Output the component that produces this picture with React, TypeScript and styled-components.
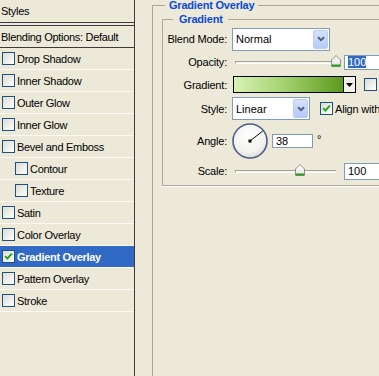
import React from 'react';
import styled, { createGlobalStyle } from 'styled-components';

const GlobalStyle = createGlobalStyle`
  html, body {
    margin: 0;
    padding: 0;
    background: #ece9d8;
    overflow: hidden;
  }
  body {
    font-family: "Liberation Sans", Arial, sans-serif;
    font-size: 11px;
    color: #000;
  }
`;

const effects = [
    { name: 'Drop Shadow' },
    { name: 'Inner Shadow' },
    { name: 'Outer Glow' },
    { name: 'Inner Glow' },
    { name: 'Bevel and Emboss' },
    { name: 'Contour', indent: true },
    { name: 'Texture', indent: true },
    { name: 'Satin' },
    { name: 'Color Overlay' },
    { name: 'Gradient Overlay', on: true, selected: true },
    { name: 'Pattern Overlay' },
    { name: 'Stroke' },
];

function Check({ on }: { on?: boolean }) {
    return (
        <CheckBox>
            {on && (
                <svg width="9" height="9" viewBox="0 0 9 9">
                    <path d="M1.2 4.2 L3.4 6.6 L7.8 1.6" fill="none" stroke="#21a121" strokeWidth="1.9"/>
                </svg>
            )}
        </CheckBox>
    );
}

function Chevron() {
    return (
        <DropBtn>
            <svg width="8" height="6" viewBox="0 0 8 6">
                <path d="M1 1.2 L4 4.2 L7 1.2" fill="none" stroke="#4d6185" strokeWidth="2"/>
            </svg>
        </DropBtn>
    );
}

function Slider({ pos }: { pos: number }) {
    return (
        <Track>
            <Thumb style={{ left: `calc(${pos}% - 5px)` }}>
                <svg width="10" height="12" viewBox="0 0 10 12">
                    <defs>
                        <linearGradient id="th" x1="0" y1="0" x2="0" y2="1">
                            <stop offset="0" stopColor="#ffffff"/>
                            <stop offset="1" stopColor="#e2e2dc"/>
                        </linearGradient>
                    </defs>
                    <path d="M0.5 5 L5 0.5 L9.5 5 L9.5 11.5 L0.5 11.5 Z" fill="url(#th)" stroke="#8e8f8f"/>
                    <rect x="1" y="9.5" width="8" height="2" fill="#21a121"/>
                </svg>
            </Thumb>
        </Track>
    );
}

function Dial({ angle }: { angle: number }) {
    const r = (angle * Math.PI) / 180;
    const x = 18 + 16 * Math.cos(r);
    const y = 18 - 16 * Math.sin(r);
    return (
        <svg width="36" height="36" viewBox="0 0 36 36">
            <defs>
                <radialGradient id="dl" cx="0.45" cy="0.35" r="0.7">
                    <stop offset="0" stopColor="#ffffff"/>
                    <stop offset="0.7" stopColor="#f1f1ee"/>
                    <stop offset="1" stopColor="#d6d6d2"/>
                </radialGradient>
            </defs>
            <circle cx="18" cy="18" r="17" fill="url(#dl)" stroke="#4b5d8a" strokeWidth="1.6"/>
            <line x1="18" y1="18" x2={x} y2={y} stroke="#000" strokeWidth="1"/>
            <rect x="16.5" y="16.5" width="3" height="3" fill="#000"/>
        </svg>
    );
}

function App() {
    return (
        <Window>
            <GlobalStyle/>
            <Sidebar>
                <Header>Styles</Header>
                <Row $dark $pad={1}>Blending Options: Default</Row>
                {effects.map(e => (
                    <Row key={e.name} $pad={e.indent ? 15 : 2} $selected={e.selected}>
                        <Check on={e.on}/>
                        <span>{e.name}</span>
                    </Row>
                ))}
            </Sidebar>
            <Main>
                <Group $w={320} $h={420}>
                    <Legend $offset={12}>Gradient Overlay</Legend>
                    <InnerGroup $w={300}>
                        <Legend $offset={10} $pr={5} $pl={6}>Gradient</Legend>
                        <Field $h={24}>
                            <Label>Blend Mode:</Label>
                            <Controls>
                                <Select $w={98} $h={23}>
                                    <span>Normal</span>
                                    <Chevron/>
                                </Select>
                            </Controls>
                        </Field>
                        <Field $h={22}>
                            <Label>Opacity:</Label>
                            <Controls>
                                <Slider pos={100}/>
                                <NumBox $h={15}>
                                    <Picked>100</Picked>
                                </NumBox>
                            </Controls>
                        </Field>
                        <Field $h={23}>
                            <Label>Gradient:</Label>
                            <Controls>
                                <Swatch>
                                    <Ramp/>
                                    <RampDrop>
                                        <svg width="7" height="4" viewBox="0 0 7 4">
                                            <path d="M0 0 H7 L3.5 4 Z" fill="#000"/>
                                        </svg>
                                    </RampDrop>
                                </Swatch>
                                <Spaced $gap={8}>
                                    <Check/>
                                </Spaced>
                            </Controls>
                        </Field>
                        <Field $h={25}>
                            <Label>Style:</Label>
                            <Controls>
                                <Select $w={78} $h={23}>
                                    <span>Linear</span>
                                    <Chevron/>
                                </Select>
                                <Spaced $gap={10}>
                                    <Check on/>
                                    <Caption>Align with</Caption>
                                </Spaced>
                            </Controls>
                        </Field>
                        <Field $h={40}>
                            <Label>Angle:</Label>
                            <Controls>
                                <Dial angle={38}/>
                                <Spaced $gap={4}>
                                    <NumBox $h={14} $w={41}>38</NumBox>
                                    <Degree>°</Degree>
                                </Spaced>
                            </Controls>
                        </Field>
                        <Field $h={20}>
                            <Label>Scale:</Label>
                            <Controls>
                                <Slider pos={64}/>
                                <NumBox $h={17}>100</NumBox>
                            </Controls>
                        </Field>
                    </InnerGroup>
                </Group>
            </Main>
        </Window>
    );
}

export default App;


const Window = styled.div`
    display: flex;
    width: 379px;
    height: 376px;
    overflow: hidden;
    background: #ece9d8;
`

const Sidebar = styled.nav`
    flex: 0 0 134px;
    display: flex;
    flex-direction: column;
    border-right: 1px solid #3c3c3c;
    letter-spacing: -0.3px;
`

const Header = styled.div`
    height: 22px;
    line-height: 22px;
    padding-left: 1px;
    border-bottom: 4px double #3c3c3c;
`

const Row = styled.div<{ $pad: number; $dark?: boolean; $selected?: boolean }>`
    display: flex;
    align-items: center;
    gap: 2px;
    height: 21px;
    padding-left: ${p => p.$pad}px;
    border-bottom: 1px solid ${p => (p.$dark ? '#3c3c3c' : '#fbfaf6')};
    background: ${p => (p.$selected ? '#316ac5' : 'transparent')};
    color: ${p => (p.$selected ? '#fff' : '#000')};
    font-weight: ${p => (p.$selected ? 700 : 400)};
    white-space: nowrap;
`

const CheckBox = styled.span`
    flex: 0 0 auto;
    width: 11px;
    height: 11px;
    border: 1px solid #1c5180;
    background: linear-gradient(135deg, #dcdcd5 0%, #f4f4f0 70%, #ffffff 100%);
    display: inline-flex;
    align-items: center;
    justify-content: center;
`

const Main = styled.main`
    flex: 1;
    min-width: 0;
    padding-left: 17px;
`

const Group = styled.fieldset<{ $w: number; $h: number }>`
    box-sizing: border-box;
    width: ${p => p.$w}px;
    height: ${p => p.$h}px;
    margin: 0;
    padding: 0;
    border: 1px solid #aaa899;
    border-radius: 0;
    min-width: 0;
`

const InnerGroup = styled.fieldset<{ $w: number }>`
    box-sizing: border-box;
    width: ${p => p.$w}px;
    margin: 3px 0 0 9px;
    padding: 2px 0 4px 0;
    border: 1px solid #aaa899;
    box-shadow: 0 1px 0 #fff;
    min-width: 0;
`

const Legend = styled.legend<{ $offset: number; $pl?: number; $pr?: number }>`
    margin-left: ${p => p.$offset}px;
    padding: 0 ${p => p.$pr ?? 4}px 0 ${p => p.$pl ?? 4}px;
    color: #0b4ad6;
    font-weight: 700;
    font-size: 11px;
    line-height: 11px;
    letter-spacing: -0.2px;
`

const Field = styled.div<{ $h: number }>`
    display: grid;
    grid-template-columns: 64px auto;
    column-gap: 5px;
    align-items: center;
    height: ${p => p.$h}px;
`

const Label = styled.label`
    text-align: right;
    white-space: nowrap;
    letter-spacing: -0.2px;
`

const Controls = styled.div`
    display: flex;
    align-items: center;
    white-space: nowrap;
`

const Spaced = styled.div<{ $gap: number }>`
    display: flex;
    align-items: center;
    gap: 2px;
    margin-left: ${p => p.$gap}px;
`

const Caption = styled.span`
    letter-spacing: -0.2px;
`

const Select = styled.div<{ $w: number; $h: number }>`
    box-sizing: border-box;
    width: ${p => p.$w}px;
    height: ${p => p.$h}px;
    border: 1px solid #7f9db9;
    background: #fff;
    display: flex;
    align-items: center;
    justify-content: space-between;
    padding: 0 1px 0 3px;
`

const DropBtn = styled.span`
    box-sizing: border-box;
    width: 15px;
    height: 19px;
    border: 1px solid #bccdf4;
    border-radius: 2px;
    background: linear-gradient(#d6e1fc, #b7caf6);
    display: flex;
    align-items: center;
    justify-content: center;
`

const Track = styled.div`
    position: relative;
    width: 100px;
    height: 1px;
    margin-left: 3px;
    background: #f3f2ec;
    border-top: 1px solid #a4a398;
    border-bottom: 1px solid #fff;
    border-left: 1px solid #a4a398;
    border-radius: 1px;
`

const Thumb = styled.span`
    position: absolute;
    top: -7px;
    line-height: 0;
`

const NumBox = styled.div<{ $h: number; $w?: number }>`
    box-sizing: border-box;
    width: ${p => p.$w ?? 60}px;
    height: ${p => p.$h}px;
    margin-left: ${p => (p.$w ? 0 : 8)}px;
    border: 1px solid #7f9db9;
    background: #fff;
    padding-left: 3px;
    display: flex;
    align-items: center;
`

const Picked = styled.span`
    background: #316ac5;
    color: #fff;
    line-height: 12px;
`

const Swatch = styled.div`
    display: flex;
    height: 17px;
    margin-left: 1px;
    box-sizing: border-box;
    border: 1px solid #000;
`

const Ramp = styled.div`
    width: 109px;
    background: linear-gradient(90deg, #d8f1b6 0%, #a6d370 45%, #5b9a1d 100%);
`

const RampDrop = styled.div`
    width: 11px;
    border-left: 1px solid #000;
    background: #f2f1ea;
    display: flex;
    align-items: center;
    justify-content: center;
`

const Degree = styled.span`
    margin-left: 2px;
    align-self: flex-start;
    line-height: 10px;
`
